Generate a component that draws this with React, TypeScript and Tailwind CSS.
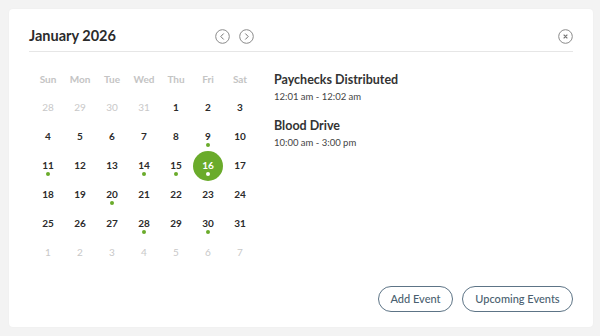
import React from "react";

type Cell = { d: number; muted?: boolean; dot?: boolean; sel?: boolean };

const weeks: Cell[][] = [
  [{ d: 28, muted: true }, { d: 29, muted: true }, { d: 30, muted: true }, { d: 31, muted: true }, { d: 1 }, { d: 2 }, { d: 3 }],
  [{ d: 4 }, { d: 5 }, { d: 6 }, { d: 7 }, { d: 8 }, { d: 9, dot: true }, { d: 10 }],
  [{ d: 11, dot: true }, { d: 12 }, { d: 13 }, { d: 14, dot: true }, { d: 15, dot: true }, { d: 16, dot: true, sel: true }, { d: 17 }],
  [{ d: 18 }, { d: 19 }, { d: 20, dot: true }, { d: 21 }, { d: 22 }, { d: 23 }, { d: 24 }],
  [{ d: 25 }, { d: 26 }, { d: 27 }, { d: 28, dot: true }, { d: 29 }, { d: 30, dot: true }, { d: 31 }],
  [{ d: 1, muted: true }, { d: 2, muted: true }, { d: 3, muted: true }, { d: 4, muted: true }, { d: 5, muted: true }, { d: 6, muted: true }, { d: 7, muted: true }],
];

const days = ["Sun", "Mon", "Tue", "Wed", "Thu", "Fri", "Sat"];

function CircleIcon({ kind }: { kind: "left" | "right" | "close" }) {
  return (
    <svg width="15" height="15" viewBox="0 0 15 15" fill="none">
      <circle cx="7.5" cy="7.5" r="6.8" stroke="#8a8a8a" strokeWidth="1" />
      {kind === "left" && <path d="M8.4 4.8 L5.8 7.5 L8.4 10.2" stroke="#777" strokeWidth="1" strokeLinecap="round" strokeLinejoin="round" />}
      {kind === "right" && <path d="M6.6 4.8 L9.2 7.5 L6.6 10.2" stroke="#777" strokeWidth="1" strokeLinecap="round" strokeLinejoin="round" />}
      {kind === "close" && <path d="M6 6 L9 9 M9 6 L6 9" stroke="#777" strokeWidth="1.1" strokeLinecap="round" />}
    </svg>
  );
}

export default function App() {
  return (
    <div className="w-[600px] h-[336px] bg-[#f3f3f3] pt-[9px] pl-[9px] pr-[7px] pb-[9px]" style={{ fontFamily: "Lato, 'Open Sans', sans-serif" }}>
      <div className="bg-white rounded-[4px] h-full flex flex-col px-[20px] shadow-[0_0_2px_rgba(0,0,0,0.04)]">
        <div className="flex items-center pt-[17px] pb-[5px] border-b border-[#e6e6e6]">
          <div className="w-[186px] text-[14.5px] leading-[20px] font-bold text-[#2b2b2b]">January 2026</div>
          <div className="flex gap-[9px]">
            <CircleIcon kind="left" />
            <CircleIcon kind="right" />
          </div>
          <div className="ml-auto flex">
            <CircleIcon kind="close" />
          </div>
        </div>
        <div className="flex-1 flex">
          <div className="ml-[3px] mt-[13px] grid grid-cols-[repeat(7,32px)] grid-rows-[28px_repeat(6,29px)]">
            {days.map((d) => (
              <div key={d} className="flex items-center justify-center text-[10px] font-bold text-[#c4c4c4]">{d}</div>
            ))}
            {weeks.flat().map((c, i) => (
              <div key={i} className="relative flex items-center justify-center">
                {c.sel && <div className="absolute w-[30px] h-[30px] rounded-full bg-[#6aab2b] left-1/2 top-1/2 -translate-x-1/2 -translate-y-1/2" />}
                <span className={`relative text-[10px] font-bold leading-none -mt-[1px] ${c.sel ? "text-white" : c.muted ? "text-[#c8c8c8] font-normal" : "text-[#2b2b2b]"}`}>{c.d}</span>
                {c.dot && (
                  <span className={`absolute w-[4px] h-[4px] rounded-full left-[14px] top-[21px] ${c.sel ? "bg-white" : "bg-[#6aab2b]"}`} />
                )}
              </div>
            ))}
          </div>
          <div className="ml-[18px] pt-[20px] text-[#333]">
            <div className="text-[12.5px] leading-[16px] font-bold text-[#333]">Paychecks Distributed</div>
            <div className="mt-[1px] text-[9.5px] leading-[16px] text-[#444]">12:01 am - 12:02 am</div>
            <div className="mt-[13px] text-[12.5px] leading-[16px] font-bold text-[#333]">Blood Drive</div>
            <div className="mt-[1px] text-[9.5px] leading-[16px] text-[#444]">10:00 am - 3:00 pm</div>
          </div>
        </div>
        <div className="flex justify-end gap-[9px] pb-[15px]">
          <button className="h-[26px] w-[75px] rounded-full border border-[#5d7486] text-[11px] font-medium text-[#4a5f70]">Add Event</button>
          <button className="h-[26px] w-[111px] rounded-full border border-[#5d7486] text-[11px] font-medium text-[#4a5f70]">Upcoming Events</button>
        </div>
      </div>
    </div>
  );
}
